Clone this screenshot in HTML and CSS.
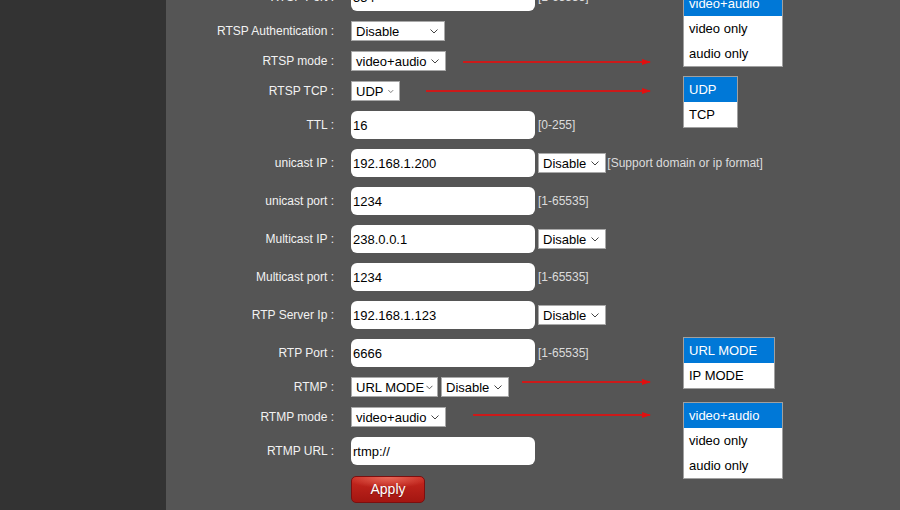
FILE: index.html
```html
<!DOCTYPE html>
<html lang="en">

<head>
  <meta charset="UTF-8">
  <meta name="viewport" content="width=device-width, initial-scale=1.0">
  <title>RTSP / RTMP Settings</title>
  <link rel="stylesheet" href="styles.css">
</head>

<body>
  <div class="sidebar"></div>

  <div class="content">
    <div class="form">
      <div class="row tall">
        <label class="label">RTSP Port :</label>
        <input class="field" type="text" value="554">
        <span class="hint">[1-65535]</span>
      </div>
      <div class="row">
        <label class="label">RTSP Authentication :</label>
        <div class="select w-94"><span>Disable</span><svg viewBox="0 0 8 5"><path d="M0.5 0.5 L4 4 L7.5 0.5"/></svg></div>
      </div>
      <div class="row">
        <label class="label">RTSP mode :</label>
        <div class="select"><span>video+audio</span><svg viewBox="0 0 8 5"><path d="M0.5 0.5 L4 4 L7.5 0.5"/></svg></div>
      </div>
      <div class="row">
        <label class="label">RTSP TCP :</label>
        <div class="select narrow"><span>UDP</span><svg viewBox="0 0 8 5"><path d="M0.5 0.5 L4 4 L7.5 0.5"/></svg></div>
      </div>
      <div class="row tall">
        <label class="label">TTL :</label>
        <input class="field" type="text" value="16">
        <span class="hint">[0-255]</span>
      </div>
      <div class="row tall">
        <label class="label">unicast IP :</label>
        <input class="field" type="text" value="192.168.1.200">
        <div class="select after-field"><span>Disable</span><svg viewBox="0 0 8 5"><path d="M0.5 0.5 L4 4 L7.5 0.5"/></svg></div>
        <span class="hint flush">[Support domain or ip format]</span>
      </div>
      <div class="row tall">
        <label class="label">unicast port :</label>
        <input class="field" type="text" value="1234">
        <span class="hint">[1-65535]</span>
      </div>
      <div class="row tall">
        <label class="label">Multicast IP :</label>
        <input class="field" type="text" value="238.0.0.1">
        <div class="select after-field"><span>Disable</span><svg viewBox="0 0 8 5"><path d="M0.5 0.5 L4 4 L7.5 0.5"/></svg></div>
      </div>
      <div class="row tall">
        <label class="label">Multicast port :</label>
        <input class="field" type="text" value="1234">
        <span class="hint">[1-65535]</span>
      </div>
      <div class="row tall">
        <label class="label">RTP Server Ip :</label>
        <input class="field" type="text" value="192.168.1.123">
        <div class="select after-field"><span>Disable</span><svg viewBox="0 0 8 5"><path d="M0.5 0.5 L4 4 L7.5 0.5"/></svg></div>
      </div>
      <div class="row tall">
        <label class="label">RTP Port :</label>
        <input class="field" type="text" value="6666">
        <span class="hint">[1-65535]</span>
      </div>
      <div class="row">
        <label class="label">RTMP :</label>
        <div class="select w-88"><span>URL MODE</span><svg viewBox="0 0 8 5"><path d="M0.5 0.5 L4 4 L7.5 0.5"/></svg></div>
        <div class="select next"><span>Disable</span><svg viewBox="0 0 8 5"><path d="M0.5 0.5 L4 4 L7.5 0.5"/></svg></div>
      </div>
      <div class="row">
        <label class="label">RTMP mode :</label>
        <div class="select"><span>video+audio</span><svg viewBox="0 0 8 5"><path d="M0.5 0.5 L4 4 L7.5 0.5"/></svg></div>
      </div>
      <div class="row tall">
        <label class="label">RTMP URL :</label>
        <input class="field" type="text" value="rtmp://">
      </div>
      <div class="row tall">
        <span class="label"></span>
        <button class="apply-btn">Apply</button>
      </div>
    </div>

    <!-- arrows pointing at the opened option lists -->
    <div class="arrow" style="left: 297px; top: 61px; width: 187px;"></div>
    <div class="arrow" style="left: 260px; top: 90px; width: 224px;"></div>
    <div class="arrow" style="left: 356px; top: 381px; width: 128px;"></div>
    <div class="arrow" style="left: 307px; top: 414px; width: 177px;"></div>

    <ul class="options" style="top: -10px; width: 100px;">
      <li class="active">video+audio</li>
      <li>video only</li>
      <li>audio only</li>
    </ul>
    <ul class="options" style="top: 76px; width: 55px;">
      <li class="active">UDP</li>
      <li>TCP</li>
    </ul>
    <ul class="options" style="top: 337px; width: 92px;">
      <li class="active">URL MODE</li>
      <li>IP MODE</li>
    </ul>
    <ul class="options" style="top: 402px; width: 100px;">
      <li class="active">video+audio</li>
      <li>video only</li>
      <li>audio only</li>
    </ul>
  </div>
</body>

</html>
```

FILE: styles.css
```css
body {
  margin: 0;
  height: 510px;
  display: flex;
  overflow: hidden;
  font-family: "Liberation Sans", Arial, sans-serif;
  background-color: #555555;
}

.sidebar {
  width: 166px;
  flex-shrink: 0;
  background-color: #333333;
}

.content {
  flex: 1;
  position: relative;
  background-color: #555555;
}

.form {
  margin-top: -22px;
}

.row {
  display: flex;
  align-items: center;
  height: 30px;
}

.row.tall {
  height: 38px;
}

.label {
  width: 168px;
  margin-right: 17px;
  text-align: right;
  font-size: 12px;
  color: #f2f2f2;
  flex-shrink: 0;
}

.field {
  width: 184px;
  height: 28px;
  box-sizing: border-box;
  border: none;
  border-radius: 6px;
  padding: 0 2px;
  font-family: "Liberation Sans", Arial, sans-serif;
  font-size: 13px;
  color: #000;
  background-color: #fff;
  outline: none;
}

.hint {
  margin-left: 3px;
  font-size: 12px;
  color: #dcdcdc;
  white-space: nowrap;
}

.hint.flush {
  margin-left: 1px;
}

.select {
  display: inline-flex;
  align-items: center;
  justify-content: space-between;
  height: 20px;
  box-sizing: border-box;
  padding: 0 6px 0 4px;
  border: 1px solid #a9a9a9;
  background-color: #fff;
  font-size: 13px;
  color: #000;
  white-space: nowrap;
}

.select span {
  margin-right: 5px;
}

.select svg {
  width: 8px;
  height: 5px;
  fill: none;
  stroke: #444;
  stroke-width: 1;
}

.select.w-94 {
  width: 94px;
}

.select.narrow {
  width: 49px;
  padding-right: 5px;
}

.select.w-88 {
  width: 87px;
  padding-right: 4px;
}

.select.w-88 span {
  margin-right: 2px;
}

.select.after-field {
  margin-left: 3px;
}

.select.next {
  margin-left: 3px;
}

.apply-btn {
  width: 74px;
  height: 27px;
  border: 1px solid #7c0f0f;
  border-radius: 5px;
  background: radial-gradient(ellipse 60% 45% at 50% 0%, #e86a5a 0%, rgba(232, 106, 90, 0) 100%),
    linear-gradient(#c8281f, #a31611);
  color: #fff;
  font-family: "Liberation Sans", Arial, sans-serif;
  font-size: 14px;
  cursor: pointer;
  text-shadow: 0 1px 1px rgba(0, 0, 0, 0.3);
}

.arrow {
  position: absolute;
  height: 2px;
  background-color: #cc1a1a;
}

.arrow::after {
  content: "";
  position: absolute;
  right: -1px;
  top: -2px;
  border-left: 9px solid #e01010;
  border-top: 3px solid transparent;
  border-bottom: 3px solid transparent;
}

.options {
  position: absolute;
  left: 517px;
  margin: 0;
  padding: 0;
  list-style: none;
  box-sizing: border-box;
  border: 1px solid #a0a0a0;
  background-color: #fff;
}

.options li {
  height: 25px;
  line-height: 25px;
  padding-left: 5px;
  font-size: 13px;
  color: #000;
}

.options li.active {
  background-color: #0078d7;
  color: #fff;
}
```
